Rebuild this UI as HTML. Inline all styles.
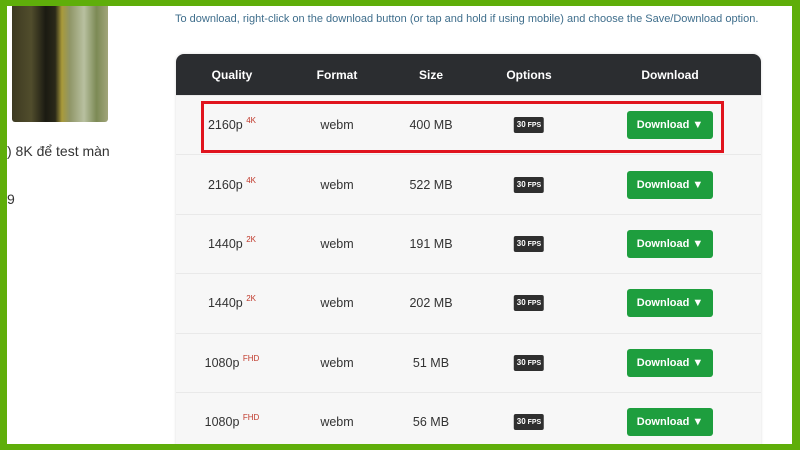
<!DOCTYPE html><html><head><style>
body{margin:0;width:800px;height:450px;overflow:hidden;background:#5fae0a;font-family:"Liberation Sans","Noto Sans CJK SC",sans-serif;}
.page{position:absolute;left:7px;top:6px;width:785px;height:438px;background:#fff;overflow:hidden}
.img{position:absolute;left:5px;top:0;width:96px;height:116px;border-radius:0 0 3px 3px;background:linear-gradient(90deg,#3d3a22 0%,#514d2c 20%,#1b1a12 35%,#2a2919 45%,#a99a3a 52%,#8f9566 60%,#b8c0a0 75%,#7c8a55 88%,#a1a57a 100%)}
.side{position:absolute;left:0;color:#333;font-size:14px}
.note{position:absolute;left:168px;top:7px;font-size:11px;color:#3f6e8c}
.tbl{position:absolute;left:169px;top:48px;width:585px;height:400px;background:#f7f7f7;border-radius:8px 8px 0 0;overflow:hidden;box-shadow:0 0 3px #ddd}
.hd{height:41px;background:#2b2d30;color:#fff;font-weight:bold;font-size:12px;position:relative}
.c{position:absolute;transform:translateX(-50%);white-space:nowrap;line-height:14px}
.row{height:58.4px;border-top:1px solid #e9e9e9;position:relative;font-size:12.5px;color:#333}
.row .c,.hd .c{top:50%;margin-top:-7px}
sup{color:#c0392b;font-size:8px;position:relative;top:-6px;vertical-align:baseline;line-height:0}
.fps{background:#2f2f2f;color:#fff;font-size:7px;font-weight:bold;padding:0 3px;border-radius:2px;line-height:15px!important;margin-top:-8px!important}
.fps b{font-size:8px}
.btn{background:#1e9e3e;color:#fff;font-weight:bold;font-size:11px;width:86px;height:28px;line-height:28px!important;text-align:center;border-radius:3px;margin-top:-14px!important}
.red{position:absolute;left:194px;top:95px;width:517px;height:46px;border:3px solid #e0141e}
</style></head><body><div class="page">
<div class="img"></div>
<div class="side" style="top:137px">) 8K để test màn</div>
<div class="side" style="top:185px">9</div>
<div class="note">To download, right-click on the download button (or tap and hold if using mobile) and choose the Save/Download option.</div>
<div class="tbl">
<div class="hd"><span class="c" style="left:56px">Quality</span><span class="c" style="left:161px">Format</span><span class="c" style="left:255px">Size</span><span class="c" style="left:353px">Options</span><span class="c" style="left:494px">Download</span></div>
<div class="row"><span class="c" style="left:56px">2160p <sup>4K</sup></span><span class="c" style="left:161px">webm</span><span class="c" style="left:255px">400 MB</span><span class="c fps" style="left:353px"><b>30</b> FPS</span><span class="c btn" style="left:494px">Download ▼</span></div>
<div class="row"><span class="c" style="left:56px">2160p <sup>4K</sup></span><span class="c" style="left:161px">webm</span><span class="c" style="left:255px">522 MB</span><span class="c fps" style="left:353px"><b>30</b> FPS</span><span class="c btn" style="left:494px">Download ▼</span></div>
<div class="row"><span class="c" style="left:56px">1440p <sup>2K</sup></span><span class="c" style="left:161px">webm</span><span class="c" style="left:255px">191 MB</span><span class="c fps" style="left:353px"><b>30</b> FPS</span><span class="c btn" style="left:494px">Download ▼</span></div>
<div class="row"><span class="c" style="left:56px">1440p <sup>2K</sup></span><span class="c" style="left:161px">webm</span><span class="c" style="left:255px">202 MB</span><span class="c fps" style="left:353px"><b>30</b> FPS</span><span class="c btn" style="left:494px">Download ▼</span></div>
<div class="row"><span class="c" style="left:56px">1080p <sup>FHD</sup></span><span class="c" style="left:161px">webm</span><span class="c" style="left:255px">51 MB</span><span class="c fps" style="left:353px"><b>30</b> FPS</span><span class="c btn" style="left:494px">Download ▼</span></div>
<div class="row"><span class="c" style="left:56px">1080p <sup>FHD</sup></span><span class="c" style="left:161px">webm</span><span class="c" style="left:255px">56 MB</span><span class="c fps" style="left:353px"><b>30</b> FPS</span><span class="c btn" style="left:494px">Download ▼</span></div>
</div>
<div class="red"></div>
</div></body></html>
